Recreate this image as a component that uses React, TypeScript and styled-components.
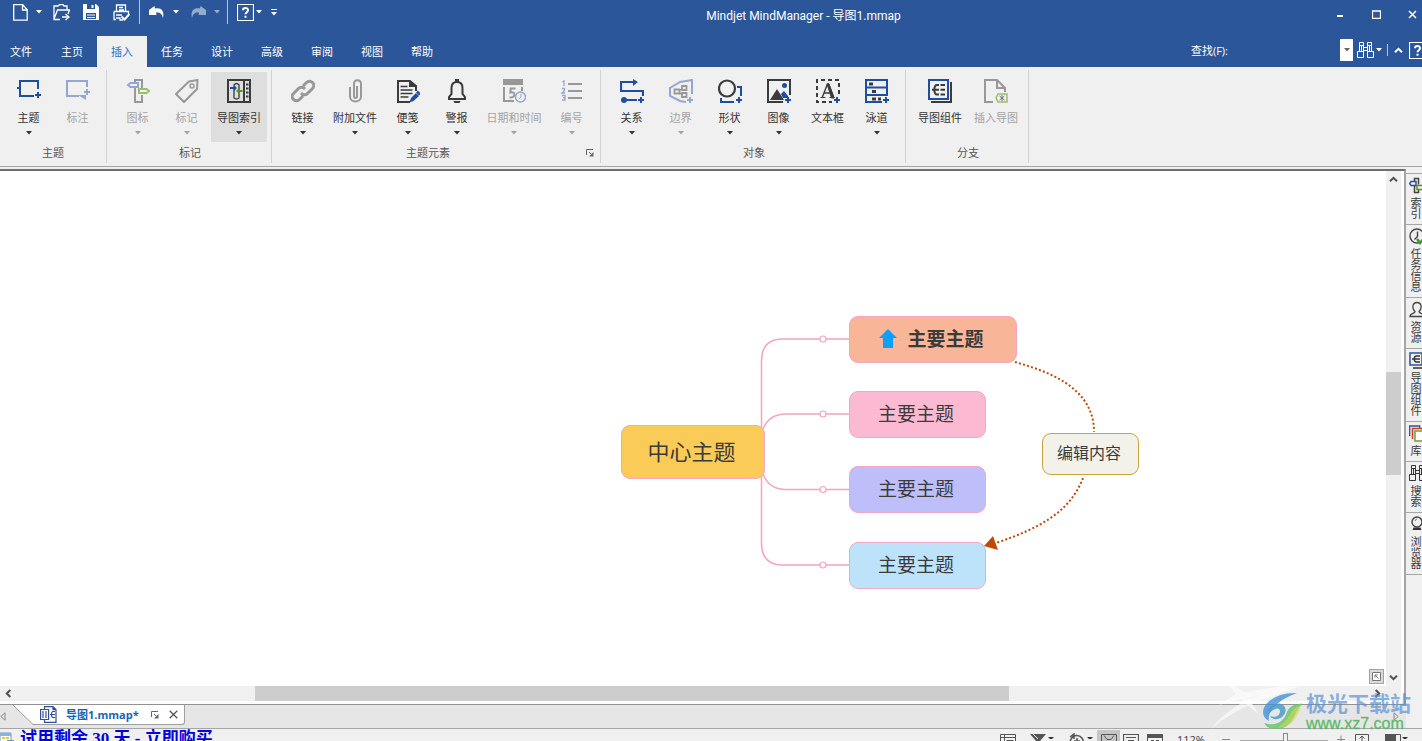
import React from "react";
import styled, { createGlobalStyle, css } from "styled-components";

const c = {
  brand: "#2b579a",
  ribbon: "#f0f0f0",
  line: "#a6a6a6",
  ink: "#3b3b3b",
  blue: "#1f4e9e",
  mutedBlue: "#93a7d0",
  grey: "#989898",
};

const GlobalStyle = createGlobalStyle`
  * { box-sizing: border-box; }
  body { margin: 0; overflow: hidden; }
  body, button, input { font-family: "Open Sans", "Noto Sans CJK SC", sans-serif; font-size: 11px; }
  button { border: 0; padding: 0; background: transparent; color: inherit; }
  svg { display: block; flex: none; }
`;

const Window = styled.div`
  position: relative;
  display: flex;
  flex-direction: column;
  height: 100vh;
  overflow: hidden;
  background: ${c.ribbon};
  color: ${c.ink};
`;

/* ---------- header ---------- */
const Header = styled.header`
  flex: none;
  background: ${c.brand};
  color: #fff;
`;
const TitleBar = styled.div`
  display: flex;
  align-items: center;
  height: 28px;
`;
const QuickAccess = styled.div`
  display: flex;
  align-items: center;
  height: 24px;
  align-self: flex-start;
  padding-left: 10px;
`;
const QuickButton = styled.button<{ $w: number; $faded?: boolean }>`
  display: flex;
  align-items: center;
  justify-content: center;
  width: ${(p) => p.$w}px;
  height: 24px;
  opacity: ${(p) => (p.$faded ? 0.5 : 1)};
`;
const Separator = styled.span<{ $h: number }>`
  width: 1px;
  height: ${(p) => p.$h}px;
  background: #b8c7e0;
`;
const Title = styled.h1`
  flex: 1;
  margin: 0;
  text-align: center;
  font-family: Roboto, "Noto Sans CJK SC", sans-serif;
  font-size: 12px;
  font-weight: 400;
`;
const WindowControls = styled.div`
  display: flex;
  gap: 24px;
  padding: 0 4px 0 12px;
`;
const ControlButton = styled.button`
  display: flex;
  align-items: center;
  justify-content: center;
  width: 12px;
  height: 24px;
`;
const TabRow = styled.div`
  display: flex;
  align-items: flex-end;
  height: 39px;
`;
const TabList = styled.nav`
  display: flex;
  flex: 1;
  padding-right: 4px;
`;
const Tab = styled.button<{ $active?: boolean }>`
  width: 50px;
  height: 31px;
  padding-bottom: 2px;
  &:first-child { width: 47px; padding-right: 5px; }
  ${(p) => p.$active && css`background: ${c.ribbon}; color: #2372c4;`}
`;
const Search = styled.div`
  display: flex;
  align-items: center;
  height: 34px;
`;
const SearchInput = styled.input`
  width: 112px;
  height: 22px;
  border: 0;
  outline: 0;
  background: transparent;
  color: #fff;
`;
const SearchDrop = styled.button`
  display: flex;
  align-items: center;
  justify-content: center;
  width: 13px;
  height: 22px;
  margin-right: 4px;
  background: #fff;
  color: #666;
`;
const HelpClip = styled.div`
  width: 17px;
  overflow: hidden;
  padding-left: 4px;
`;

/* ---------- ribbon ---------- */
const Ribbon = styled.section`
  flex: none;
  display: flex;
  height: 100px;
  padding-top: 3px;
  border-bottom: 1px solid ${c.line};
`;
const Group = styled.div<{ $left: number }>`
  position: relative;
  display: flex;
  flex-direction: column;
  height: 93px;
  padding: 2px 4px 0 ${(p) => p.$left}px;
  border-right: 1px solid #d2d2d2;
`;
const GroupItems = styled.div`
  display: flex;
`;
const GroupLabel = styled.div<{ $launcher?: boolean }>`
  margin-top: 3px;
  padding-right: ${(p) => (p.$launcher ? 18 : 0)}px;
  line-height: 16px;
  text-align: center;
  color: #555;
`;
const Launcher = styled.button`
  position: absolute;
  right: 6px;
  bottom: 6px;
`;
const Tool = styled.button<{ $w: number; $active?: boolean; $off?: boolean }>`
  display: flex;
  flex-direction: column;
  align-items: center;
  width: ${(p) => p.$w}px;
  height: 70px;
  padding-top: 7px;
  white-space: nowrap;
  color: ${(p) => (p.$off ? "#a3a3a3" : "#333")};
  background: ${(p) => (p.$active ? "#dedede" : "transparent")};
`;
const ToolLabel = styled.span`
  margin: 7px 0 5px;
  line-height: 16px;
`;

/* ---------- work area ---------- */
const Middle = styled.div`
  display: flex;
  flex: 1;
  min-height: 0;
  border-bottom: 1px solid ${c.line};
`;
const DocumentPane = styled.div`
  display: flex;
  flex-direction: column;
  flex: 1;
  min-width: 0;
  margin-top: 2px;
`;
const CanvasFrame = styled.div`
  flex: 1;
  min-height: 0;
  display: grid;
  grid-template-columns: 1fr 15px;
  grid-template-rows: 1fr 15px;
  padding: 0 3px 3px 0;
  border-top: 2px solid #6e6e6e;
  border-right: 2px solid ${c.line};
  background: #fdfdfd;
`;
const Canvas = styled.main`
  position: relative;
  overflow: hidden;
  background: #fff;
`;
const Links = styled.svg`
  position: absolute;
  inset: 0;
  width: 100%;
  height: 100%;
`;
const Node = styled.div<{ $x: number; $y: number; $w: number; $h: number; $bg: string; $size: number; $line?: string }>`
  position: absolute;
  left: ${(p) => p.$x}px;
  top: ${(p) => p.$y}px;
  width: ${(p) => p.$w}px;
  height: ${(p) => p.$h}px;
  display: flex;
  align-items: center;
  justify-content: center;
  gap: 10px;
  padding: 0 3px 2px 0;
  border: 1px solid ${(p) => p.$line ?? "#f4a6c4"};
  border-radius: 9px;
  background: ${(p) => p.$bg};
  font-size: ${(p) => p.$size}px;
  line-height: 24px;
  white-space: nowrap;
`;
const StrongText = styled.strong`
  font-weight: 700;
`;
const FitButton = styled.button`
  position: absolute;
  right: 2px;
  bottom: 2px;
  display: flex;
  align-items: center;
  justify-content: center;
  width: 15px;
  height: 15px;
  border: 1px solid #a4a4a4;
  background: #dadada;
`;
const VScroll = styled.div`
  display: flex;
  flex-direction: column;
  align-items: center;
  background: #f0f0f0;
`;
const HScroll = styled.div`
  display: flex;
  align-items: center;
  background: #f0f0f0;
`;
const ScrollButton = styled.button`
  display: flex;
  flex: none;
  align-items: center;
  justify-content: center;
  width: 17px;
  height: 17px;
`;
const Track = styled.div<{ $before: number; $thumb: number; $after: number; $dir: "row" | "column" }>`
  flex: 1;
  align-self: stretch;
  display: grid;
  ${(p) => (p.$dir === "row" ? "grid-template-columns" : "grid-template-rows")}: ${(p) => `${p.$before}fr ${p.$thumb}fr ${p.$after}fr`};
`;
const Thumb = styled.div<{ $dir: "row" | "column" }>`
  background: #cdcdcd;
  ${(p) => (p.$dir === "row" ? "grid-column: 2" : "grid-row: 2")};
`;
const Corner = styled.div`
  background: #f0f0f0;
`;

const DocTabs = styled.div`
  display: flex;
  flex: none;
  justify-content: space-between;
  height: 24px;
  border-top: 1px solid #929292;
  background: #e6e6e6;
`;
const DocTabsLeft = styled.div`
  display: flex;
  align-items: flex-start;
`;
const NavArrow = styled.button`
  display: flex;
  align-items: center;
  width: 13px;
  height: 23px;
`;
const DocTab = styled.div`
  display: flex;
  align-items: center;
  height: 20px;
  padding: 0 6px 0 6px;
  border: solid #a0a0a0;
  border-width: 0 1px 1px 0;
  border-radius: 0 0 3px 0;
  background: #fff;
`;
const DocName = styled.span`
  margin: 0 12px 0 9px;
  color: #1565b5;
  font-weight: 700;
  line-height: 18px;
`;
const DocButton = styled.button`
  margin-right: 10px;
  &:last-child { margin-right: 0; }
`;

/* ---------- side rail ---------- */
const Rail = styled.aside`
  flex: none;
  width: 16px;
  margin-top: 6px;
  overflow: hidden;
`;
const RailTab = styled.button`
  display: flex;
  flex-direction: column;
  align-items: flex-start;
  width: 20px;
  padding: 3px 0 5px 3px;
  border-top: 1px solid ${c.line};
  &:last-child { border-bottom: 1px solid ${c.line}; }
`;
const RailText = styled.span`
  margin-top: 3px;
  writing-mode: vertical-rl;
  text-orientation: upright;
  line-height: 13px;
`;

/* ---------- status bar ---------- */
const StatusBar = styled.footer`
  flex: none;
  display: flex;
  justify-content: space-between;
  height: 12px;
  overflow: hidden;
`;
const TrialLink = styled.a`
  display: flex;
  gap: 6px;
  height: 24px;
  color: #0000e0;
  font-family: "Liberation Serif", "Noto Sans CJK SC", serif;
  font-size: 17px;
  font-weight: 700;
  line-height: 20px;
  text-decoration: none;
  white-space: nowrap;
`;
const StatusTools = styled.div`
  display: flex;
  flex: none;
  align-items: flex-start;
  height: 24px;
  padding: 4px 14px 0 0;
`;
const StatusButton = styled.button<{ $w: number; $gap: number; $on?: boolean }>`
  display: flex;
  justify-content: center;
  width: ${(p) => p.$w}px;
  height: 20px;
  margin-left: ${(p) => p.$gap}px;
  ${(p) => p.$on && css`margin-top: -3px; padding-top: 3px; background: #c6c6c6;`}
`;
const ZoomValue = styled.span`
  width: 45px;
  margin-left: 14px;
  line-height: 14px;
`;
const ZoomSlider = styled.input`
  appearance: none;
  width: 88px;
  height: 14px;
  margin: 0 0 0 10px;
  background: linear-gradient(#a8a8a8, #a8a8a8) 0 7px / 100% 1px no-repeat;
  &::-webkit-slider-thumb {
    appearance: none;
    width: 5px;
    height: 14px;
    border: 1px solid #8a8a8a;
    background: #f0f0f0;
  }
`;

/* ---------- watermark ---------- */
const Watermark = styled.div`
  position: absolute;
  right: 11px;
  bottom: 8px;
  display: flex;
  align-items: flex-end;
  pointer-events: none;
`;
const Streaks = styled.svg`
  position: absolute;
  right: 106px;
  bottom: 2px;
`;
const Swirl = styled.svg`
  position: relative;
  margin-bottom: 3px;
`;
const MarkText = styled.div`
  position: relative;
  margin-left: 2px;
  font-size: 21px;
  font-weight: 700;
  line-height: 24px;
  color: rgba(86, 144, 214, 0.7);
`;
const MarkUrl = styled.div`
  font-family: "Liberation Sans", sans-serif;
  font-size: 16px;
  line-height: 18px;
  -webkit-text-stroke: 1px rgba(88, 184, 100, 0.3);
  color: rgba(78, 178, 92, 0.9);
  font-weight: 400;
`;

/* ---------- small glyphs ---------- */
const Caret = ({ color = "currentColor" }: { color?: string }) => (
  <svg width="6" height="4" viewBox="0 0 6 4"><path d="M0 0h6L3 3.5z" fill={color} /></svg>
);
const Chevron = ({ turn = 0, color = "#505050" }: { turn?: number; color?: string }) => (
  <svg width="9" height="9" viewBox="0 0 9 9">
    <path d="M1 6.3 4.5 2.8 8 6.3" fill="none" stroke={color} strokeWidth="2" transform={`rotate(${turn} 4.5 4.5)`} />
  </svg>
);
const CornerArrow = () => (
  <svg width="8" height="8" viewBox="0 0 8 8" fill="none" stroke="#666">
    <path d="M.5 6V.5H7M3 3l3.500 3.500" />
    <path d="M7.500 3v4.500H3z" fill="#666" stroke="none" />
  </svg>
);
const I = ({ children, size = 24 }: { children: React.ReactNode; size?: number }) => (
  <svg width={size} height={size} viewBox={`0 0 ${size} ${size}`} fill="none">{children}</svg>
);
const Plus = ({ x, y, color = c.blue }: { x: number; y: number; color?: string }) => (
  <path d={`M${x - 3} ${y}h6M${x} ${y - 3}v6`} stroke={color} strokeWidth="2" />
);
const MenuMark = () => <I size={6}><path d="M0 4h6L3 7z" fill="#333" /></I>;
const Binoculars = ({ color = "#fff" }: { color?: string }) => (
  <svg width="17" height="16" viewBox="0 0 17 16" fill="none" stroke={color}>
    <path d="M2.500.5h4v3h-4zM10.500.5h4v3h-4zM2.500 3.500v6h4v-6M10.500 3.500v6h4v-6M.5 9.500h6v6h-6zM10.500 9.500h6v6h-6zM6.500 5.500h4M6.500 8.500h4M4.500 4v5M12.500 4v5" />
  </svg>
);
const HelpBox = () => (
  <svg width="17" height="17" viewBox="0 0 17 17" fill="none" stroke="#fff">
    <path d="M.5.5h16v16H.5z" strokeWidth="1.200" />
    <path d="M6 6.300C6 3.300 11 3.300 11 6.200c0 2-2.500 2-2.500 4.100M8.500 11.800v2" strokeWidth="2" />
  </svg>
);

/* ---------- ribbon icons ---------- */
const icons: Record<string, React.ReactNode> = {
  topic: <I><path d="M21 10V2H3v15h14M0 9h3" stroke={c.blue} strokeWidth="2" /><Plus x={21} y={16} /></I>,
  callout: <I><path d="M21 8V2H1v15h12" stroke={c.mutedBlue} strokeWidth="2" /><path d="M12 16h8v5z" fill={c.mutedBlue} /><Plus x={21} y={13} color={c.mutedBlue} /></I>,
  marker: <I>
    <path d="M9 3V1h7v8M16 16v7H9V9" stroke={c.grey} strokeWidth="2" />
    <path d="M12 4H4.500L2 6l2.500 2H12z" stroke={c.mutedBlue} strokeWidth="2" />
    <path d="M13 10h7.500l2.500 2-2.500 2H13z" stroke="#9cbd6c" strokeWidth="2" />
  </I>,
  tag: <I><path d="M14 2.500 22.500 1 22 10 9 23 1 15z" stroke={c.grey} strokeWidth="2" strokeLinejoin="round" /><circle cx="17" cy="7" r="2" stroke={c.grey} strokeWidth="1.500" /></I>,
  index: <I>
    <path d="M1 1h22v22H1zM17 1v22" stroke={c.ink} strokeWidth="2" />
    <path d="M19 5.500h2.500M19 9.500h2.500M19 13.500h2.500M19 17.500h2.500" stroke={c.ink} strokeWidth="2" />
    <path d="M7 8V6q2.500-3 5 0v13q-2.500 2-5 0V10" stroke={c.ink} strokeWidth="1.300" />
    <path d="M3 8h4V6l3 3-3 3v-2H3z" fill={c.blue} /><path d="M15.500 11h-3V9l-3.500 3 3.500 3v-2h3z" fill="#5e8c1e" />
  </I>,
  link: <I>
    <path d="m10 14 .5.500a4 4 0 0 0 6 0l5-5a4 4 0 0 0-6-6L12 7" stroke={c.grey} strokeWidth="3" />
    <path d="m14 10-.5-.5a4 4 0 0 0-6 0l-5 5a4 4 0 0 0 6 6L12 17" stroke={c.grey} strokeWidth="3" />
  </I>,
  clip: <I><path d="M7 8v9.500c0 6.500 11 6.500 11 0V5c0-5-7-5-7 0v12c0 2.500 3 2.500 3 0V7" stroke={c.grey} strokeWidth="2" /></I>,
  note: <I>
    <path d="M20 12V7l-6-5H2v21h12" stroke={c.ink} strokeWidth="2" /><path d="M13 1v7h8z" fill={c.ink} />
    <path d="M4.500 7.500h7M4.500 11h12M4.500 14.500h12M4.500 18h8" stroke={c.ink} strokeWidth="1.500" />
    <path d="m13.500 23.500 1.500-4.500 5-5 3 3-5.500 5z" fill={c.blue} /><path d="m21 12.500 3 3" stroke={c.blue} strokeWidth="2.500" />
  </I>,
  bell: <I>
    <path d="M4 20h16v-2l-2.500-3V9c0-4-2.500-6-5.500-6S6.500 5 6.500 9v6L4 18z" stroke={c.ink} strokeWidth="2" />
    <path d="M10 0h4v3h-4zM8.500 22h7q-1 3-3.500 3t-3.500-3z" fill={c.ink} />
  </I>,
  date: <I>
    <path d="M1 0h20v6H1z" fill={c.grey} /><path d="M2 8v14h10M20 8v4" stroke={c.grey} strokeWidth="2" />
    <path d="M13.500 9.500H8.700l-.4 4c5.500-1.500 6 5.500-.8 5" stroke={c.grey} strokeWidth="2" />
    <circle cx="18.500" cy="18" r="5" stroke={c.mutedBlue} strokeWidth="1.500" fill="#f0f0f0" /><path d="M19 14.500V18l-2 2" stroke={c.mutedBlue} />
  </I>,
  number: <I>
    <path d="M8 5h14M8 12h14M8 19h14" stroke={c.grey} strokeWidth="2" />
    <path d="M2.500 3 4 2v5M2 9.500h2.500v2L2 14h3M2 16.500h3v4.500H2M3 18.700h2" stroke={c.mutedBlue} strokeWidth="1.300" />
  </I>,
  relation: <I>
    <path d="M14 3H1v9h22v5" stroke={c.blue} strokeWidth="2.200" /><path d="M13 0l5 3-5 4z" fill={c.blue} />
    <circle cx="4" cy="21" r="3" fill={c.blue} /><path d="M4 21h13" stroke={c.blue} strokeWidth="2" /><Plus x={21} y={21} />
  </I>,
  boundary: <I>
    <path d="M23 15V1L11 3 1 9v8l10 5 6 1" stroke={c.mutedBlue} strokeWidth="2" />
    <path d="M5.500 10.500h5v4h-5zM13 7h4.500v4H13zM13 14h4.500v4H13zM10.500 11l3-1M10.500 14l3 1" stroke={c.grey} strokeWidth="1.800" /><Plus x={21} y={21} color={c.mutedBlue} />
  </I>,
  shape: <I><circle cx="9" cy="9.500" r="8" stroke={c.ink} strokeWidth="2.200" /><path d="M19 8h4v9M3 19v4h13" stroke={c.blue} strokeWidth="2" /><Plus x={21} y={21} /></I>,
  image: <I>
    <path d="M23 16V1H1v22h15" stroke={c.ink} strokeWidth="2" /><path d="m3 21 7-11 7 11z" fill={c.ink} />
    <path d="m14 15 3-3 4 5v2h-5z" fill={c.blue} /><circle cx="17.500" cy="6.500" r="2.500" fill={c.blue} /><Plus x={21} y={21} />
  </I>,
  textbox: <I>
    <path d="M23 15V1H1v22h15" stroke={c.ink} strokeWidth="2" strokeDasharray="4 3" />
    <path d="m6 19 5.500-14h1L18 19M8 14h7" stroke={c.ink} strokeWidth="1.400" /><path d="m11 5 4.500 14h2.500L13 5zM4.500 18.500h5M13.500 18.500h4" fill={c.ink} stroke={c.ink} />
    <Plus x={21} y={21} />
  </I>,
  lane: <I>
    <path d="M22 17V1H1v22h16M1 8.500h21M1 16h21" stroke={c.blue} strokeWidth="2" />
    <path d="M4 3.500h4v3H4zM7 11h4v3H7zM7 18.500h4v3H7zM13 18.500h3v3h-3z" fill={c.ink} /><Plus x={21} y={21} />
  </I>,
  parts: <I>
    <path d="M23 3v20H3" stroke={c.ink} strokeWidth="2" /><path d="M1 1h19v19H1z" stroke={c.blue} strokeWidth="2" />
    <path d="M11 6H9C5.500 6 5.500 15.500 9 15.500h2M4 10.700h7M12.500 6H17M12.500 10.700H17M12.500 15.500H17" stroke={c.ink} strokeWidth="2" />
  </I>,
  insertMap: <I>
    <path d="M9 23H1V1h12l8 8v4M13 1v8h8" stroke={c.grey} strokeWidth="2" />
    <path d="M14 15h9v8h-9l-2-4z" stroke="#9cbd6c" strokeWidth="1.500" /><path d="m15.500 17 5 4m0-4-5 4M18 16v6" stroke="#777" />
  </I>,
};

type ToolSpec = [icon: string, label: string, width: number, state?: string];
const groups: { label: string; left: number; launcher?: boolean; tools: ToolSpec[] }[] = [
  { label: "主题", left: 4, tools: [["topic", "主题", 49, "v"], ["callout", "标注", 49, "off"]] },
  { label: "标记", left: 6, tools: [["marker", "图标", 49, "v off"], ["tag", "标记", 49, "v off"], ["index", "导图索引", 56, "v active"]] },
  {
    label: "主题元素", left: 6, launcher: true,
    tools: [["link", "链接", 49, "v"], ["clip", "附加文件", 56, "v"], ["note", "便笺", 49, "v"], ["bell", "警报", 49, "v"], ["date", "日期和时间", 66, "v off"], ["number", "编号", 49, "v off"]],
  },
  {
    label: "对象", left: 6,
    tools: [["relation", "关系", 49, "v"], ["boundary", "边界", 49, "v off"], ["shape", "形状", 49, "v"], ["image", "图像", 49, "v"], ["textbox", "文本框", 49], ["lane", "泳道", 49, "v"]],
  },
  { label: "分支", left: 6, tools: [["parts", "导图组件", 56], ["insertMap", "插入导图", 56, "off"]] },
];

const tabs = ["文件", "主页", "插入", "任务", "设计", "高级", "审阅", "视图", "帮助"];

const railTabs: [string, React.ReactNode][] = [
  ["索引", <I size={17}><path d="M5.500 4V1.500h4v6M9.500 12.500v3h-4v-7" stroke="#444" strokeWidth="1.500" /><path d="M7 4.500H2l-1.300 2L2 8.500h5z" stroke="#2b4fa0" strokeWidth="1.500" /><path d="M8 8.500h7v4H8z" stroke="#5e8c1e" strokeWidth="1.500" /></I>],
  ["任务信息", <I size={17}><circle cx="8" cy="8" r="7" stroke="#444" strokeWidth="1.400" /><path d="M8.500 3.500v5l-3 3" stroke="#444" strokeWidth="1.400" /><path d="m8 11 3 4 5-6" stroke="#3f9a1e" strokeWidth="2.500" /></I>],
  ["资源", <I size={17}><path d="M1 15.500c0-4 5-2.500 5-5C2.500 7 3.500 1.500 8 1.500s5.500 5.500 2 9c0 2.500 5 1 5 5z" stroke="#444" strokeWidth="1.300" /></I>],
  ["导图组件", <I size={17}><path d="M15.500 4v12H4" stroke="#333" strokeWidth="1.400" /><path d="M1 1h12v12H1z" stroke="#2b4fa0" strokeWidth="1.500" /><path d="M11 4H7.500C4.500 4 4.500 10 7.500 10H11M3 7h8" stroke="#333" strokeWidth="1.400" /></I>],
  ["库", <I size={17}><path d="M.7 11V1h10v2" stroke="#2b4fa0" strokeWidth="1.300" /><path d="M3.500 14V3.500h10v2" stroke="#d13b2a" strokeWidth="1.500" /><path d="M6 6h10v10H6z" stroke="#6ea02c" strokeWidth="1.500" fill="#fff" /></I>],
  ["搜索", <I size={17}><Binoculars color="#333" /></I>],
  ["浏览器", <I size={17}><circle cx="8" cy="6" r="5" stroke="#444" strokeWidth="1.400" /><path d="M4.500 11.500h7l1 2.500h-9z" fill="#333" /><path d="M6 5q.5-2 2-2" stroke="#777" /></I>],
];

const topics = [
  { y: 145, w: 168, bg: "#f8b597", marked: true },
  { y: 220, w: 137, bg: "#fbbad2" },
  { y: 295, w: 137, bg: "#bdbefa" },
  { y: 371, w: 137, bg: "#bde3fb" },
];

const branches = [
  "M761.500 270V190Q761.500 168 783 168H849",
  "M763 258Q769 243 786 243H849",
  "M763 303Q769 318.500 786 318.500H849",
  "M761.500 290V372Q761.500 394 783 394H849",
];

export default function App() {
  return (
    <>
      <GlobalStyle />
      <Window>
        <Header>
          <TitleBar>
            <QuickAccess>
              <QuickButton $w={20} aria-label="新建"><svg width="15" height="17" viewBox="0 0 15 17" fill="none" stroke="#fff" strokeWidth="1.300"><path d="M.7.7h9l4.500 5v10.500H.7zM9.500 1v5h4.500" /></svg></QuickButton>
              <QuickButton $w={17} aria-label="新建选项"><Caret /></QuickButton>
              <QuickButton $w={28} aria-label="打开"><svg width="17" height="17" viewBox="0 0 17 17" fill="none" stroke="#fff" strokeWidth="1.300"><path d="M7 15.500H1V2h4l1.500-1.300H10l1 1.300h3v4M1 15 4.500 6h12l-1.500 4M9 13h6" /><path d="m12.500 10 3.500 3-3.500 3" /></svg></QuickButton>
              <QuickButton $w={31} aria-label="保存"><svg width="16" height="16" viewBox="0 0 16 16"><path d="M0 0h13l3 3v13H0z" fill="#fff" /><path d="M4 0h8v5H4zM3 9h10v6H3z" fill={c.brand} /><path d="M8.500 1h2v3h-2zM4 10.500h8v1H4zM4 13h8v1H4z" fill="#fff" /></svg></QuickButton>
              <QuickButton $w={30} aria-label="打印"><svg width="17" height="17" viewBox="0 0 17 17" fill="none" stroke="#fff" strokeWidth="1.300"><path d="M3.500 7V1h9v6M6 3.500h4M6 6h5M1 7.500h14.500V11M3 15.500H1v-8M3 11h6M3 14h4v2h3" /><path d="m8.500 12.500 3 3 5-5.500" strokeWidth="2" /></svg></QuickButton>
              <QuickButton as="span" $w={6}><Separator $h={24} /></QuickButton>
              <QuickButton $w={29} aria-label="撤消"><svg width="16" height="13" viewBox="0 0 16 13"><path d="M0 4 5.500 0 6 2.500C11 1 16 4 14 12 13 7 10 6 7 6.500L7.500 9 0 9z" fill="#fff" /></svg></QuickButton>
              <QuickButton $w={9} aria-label="撤消选项"><Caret /></QuickButton>
              <QuickButton $w={35} $faded aria-label="重做"><svg width="16" height="13" viewBox="0 0 16 13"><path d="M16 4 10.500 0 10 2.500C5 1 0 4 2 12 3 7 6 6 9 6.500L8.500 9 16 9z" fill="#fff" /></svg></QuickButton>
              <QuickButton $w={4} $faded aria-label="重做选项"><Caret /></QuickButton>
              <QuickButton as="span" $w={17}><Separator $h={24} /></QuickButton>
              <QuickButton $w={18} aria-label="帮助"><HelpBox /></QuickButton>
              <QuickButton $w={9} aria-label="帮助选项"><Caret /></QuickButton>
              <QuickButton $w={22} aria-label="自定义"><svg width="6" height="7" viewBox="0 0 6 7" fill="#fff"><path d="M0 0h6v1H0zM0 3h6L3 6.500z" /></svg></QuickButton>
            </QuickAccess>
            <Title>Mindjet MindManager - 导图1.mmap</Title>
            <WindowControls>
              <ControlButton aria-label="最小化"><svg width="8" height="8" viewBox="0 0 8 8"><path d="M1 5h6v2H1z" fill="#fff" /></svg></ControlButton>
              <ControlButton aria-label="最大化"><svg width="9" height="9" viewBox="0 0 9 9"><path d="M.5 1h8v7.500h-8zM0 1h9" fill="none" stroke="#fff" strokeWidth="1.300" /></svg></ControlButton>
              <ControlButton aria-label="关闭"><svg width="9" height="9" viewBox="0 0 9 9"><path d="m1 1 7 7M8 1 1 8" stroke="#fff" strokeWidth="1.500" /></svg></ControlButton>
            </WindowControls>
          </TitleBar>
          <TabRow>
            <TabList>
              {tabs.map((t) => <Tab key={t} $active={t === "插入"}>{t}</Tab>)}
            </TabList>
            <Search>
              <label htmlFor="find">查找(F):</label>
              <SearchInput id="find" />
              <SearchDrop aria-label="查找历史"><Caret /></SearchDrop>
              <QuickButton $w={17} aria-label="查找"><Binoculars /></QuickButton>
              <QuickButton $w={9} aria-label="查找选项"><Caret /></QuickButton>
              <QuickButton as="span" $w={9}><Separator $h={12} /></QuickButton>
              <QuickButton $w={13} aria-label="折叠功能区"><Chevron color="#fff" /></QuickButton>
              <HelpClip><HelpBox /></HelpClip>
            </Search>
          </TabRow>
        </Header>

        <Ribbon>
          {groups.map((g) => (
            <Group key={g.label} $left={g.left}>
              <GroupItems>
                {g.tools.map(([icon, label, w, state = ""]) => (
                  <Tool key={icon} $w={w} $off={state.includes("off")} $active={state.includes("active")}>
                    {icons[icon]}
                    <ToolLabel>{label}</ToolLabel>
                    {state.includes("v") && <Caret />}
                  </Tool>
                ))}
              </GroupItems>
              <GroupLabel $launcher={g.launcher}>{g.label}</GroupLabel>
              {g.launcher && <Launcher aria-label="更多选项"><CornerArrow /></Launcher>}
            </Group>
          ))}
        </Ribbon>

        <Middle>
          <DocumentPane>
            <CanvasFrame>
              <Canvas>
                <Links>
                  <g fill="none" stroke="#f5a3c0" strokeWidth="1.500">
                    {branches.map((d) => <path key={d} d={d} />)}
                    {[168, 243, 318.5, 394].map((y) => <circle key={y} cx="823" cy={y} r="3" fill="#fff" strokeWidth="1.200" />)}
                  </g>
                  <g fill="none" stroke="#bf4a08" strokeWidth="2" strokeDasharray="2 2.200">
                    <path d="M1015 191C1050 201 1094 217 1094 261" />
                    <path d="M1083 307C1070 341 1040 357 996 372" />
                  </g>
                </Links>
                <Node $x={621} $y={254} $w={144} $h={54} $bg="#facb57" $size={22}>中心主题</Node>
                {topics.map((t) => (
                  <Node key={t.y} $x={849} $y={t.y} $w={t.w} $h={47} $bg={t.bg} $size={19}>
                    {t.marked ? (
                      <>
                        <svg width="18" height="19" viewBox="0 0 18 19"><path d="m9 0 9 9h-4v10H4V9H0z" fill="#0c9ffb" /></svg>
                        <StrongText>主要主题</StrongText>
                      </>
                    ) : "主要主题"}
                  </Node>
                ))}
                <Node $x={1042} $y={262} $w={97} $h={42} $bg="#f3f2ea" $line="#c9a43c" $size={16}>编辑内容</Node>
                <Links><path d="M984 375 993 365 998 379z" fill="#bf4a08" /></Links>
                <FitButton aria-label="适合窗口">
                  <svg width="9" height="9" viewBox="0 0 9 9" fill="none" stroke="#777"><path d="M.5.5h8v8h-8z" fill="#fff" /><path d="M3 5.500V3h2.500M3 3l3.500 3.500" /></svg>
                </FitButton>
              </Canvas>
              <VScroll>
                <ScrollButton aria-label="向上"><Chevron /></ScrollButton>
                <Track $dir="column" $before={184} $thumb={103} $after={194}><Thumb $dir="column" /></Track>
                <ScrollButton aria-label="向下"><Chevron turn={180} /></ScrollButton>
              </VScroll>
              <HScroll>
                <ScrollButton aria-label="向左"><Chevron turn={-90} /></ScrollButton>
                <Track $dir="row" $before={238} $thumb={754} $after={360}><Thumb $dir="row" /></Track>
                <ScrollButton aria-label="向右"><Chevron turn={90} /></ScrollButton>
              </HScroll>
              <Corner />
            </CanvasFrame>
            <DocTabs>
              <DocTabsLeft>
                <NavArrow aria-label="上一个"><svg width="6" height="9" viewBox="0 0 6 9"><path d="M5 .8v7.400L.8 4.500z" fill="none" stroke="#888" /></svg></NavArrow>
                <svg width="21" height="20" viewBox="0 0 21 20"><path d="M0 0h21v20h-1z" fill="#fff" /><path d="m0 0 20 19.500h1" fill="none" stroke="#999" /></svg>
                <DocTab>
                  <svg width="17" height="17" viewBox="0 0 17 17" fill="none" stroke="#31509a" strokeWidth="1.200"><path d="M4.500 3V.6H13l3 3v12.800H4.500V14M.6 3.500h8v10h-8zM3 5v7M6 5v7M15 5.500h-2c-2 0-2 6 0 6h2M10 8.500h5M13 .6v3h3" /></svg>
                  <DocName>导图1.mmap*</DocName>
                  <DocButton aria-label="还原"><CornerArrow /></DocButton>
                  <DocButton aria-label="关闭导图"><svg width="9" height="9" viewBox="0 0 9 9"><path d="m.7.7 7.600 7.600M8.300.7.7 8.300" stroke="#555" strokeWidth="1.300" /></svg></DocButton>
                </DocTab>
              </DocTabsLeft>
              <NavArrow aria-label="下一个"><svg width="6" height="9" viewBox="0 0 6 9"><path d="M1 .8v7.400L5.200 4.500z" fill="none" stroke="#888" /></svg></NavArrow>
            </DocTabs>
          </DocumentPane>
          <Rail>
            {railTabs.map(([label, icon]) => (
              <RailTab key={label}>{icon}<RailText>{label}</RailText></RailTab>
            ))}
          </Rail>
        </Middle>

        <StatusBar>
          <TrialLink href="#buy">
            <svg width="14" height="16" viewBox="0 0 14 16"><path d="M0 4h11v9H0z" fill="#fff" stroke="#7c96bd" /><path d="M0 4h11v3H0z" fill="#86b3e6" /><path d="M2 8h3v2H2zM6 8h3v2H6z" fill="#e3c75a" /><path d="M7 11h7v5H7z" fill="#6d93c2" /></svg>
            试用剩余 30 天 - 立即购买
          </TrialLink>
          <StatusTools>
            <StatusButton $gap={0} $w={16} aria-label="大纲"><I size={16}><path d="M.5 1.500h15v12H.5zM.5 4.500h15M4.500 1.500v12M6.500 7.500h7M6.500 10.500h7" stroke="#555" /></I></StatusButton>
            <StatusButton $gap={14} $w={16} aria-label="筛选"><I size={16}><path d="M0 1h16l-6 7v6H6V8z" fill="#555" /><path d="m3 1 5 5" stroke="#f0f0f0" /></I></StatusButton>
            <StatusButton $gap={2} $w={6} aria-label="筛选选项"><MenuMark /></StatusButton>
            <StatusButton $gap={15} $w={16} aria-label="刷新"><I size={16}><path d="M2 12A6.500 6.500 0 1 1 14 11M1 4l4-3v5M8 5v6M5 8h6" stroke="#555" strokeWidth="1.500" /></I></StatusButton>
            <StatusButton $gap={2} $w={6} aria-label="刷新选项"><MenuMark /></StatusButton>
            <StatusButton $gap={4} $w={23} $on aria-label="导图视图"><I size={16}><path d="M.5 1.500h15v12H.5zM3 2.500l3 4h4l3-4" stroke="#555" /></I></StatusButton>
            <StatusButton $gap={3} $w={16} aria-label="大纲视图"><I size={16}><path d="M.5 1.500h15v12H.5zM3 4.500h10M5 7.500h6" stroke="#555" strokeWidth="1.200" /></I></StatusButton>
            <StatusButton $gap={8} $w={16} aria-label="计划视图"><I size={16}><path d="M.5 1.500h15v12H.5z" stroke="#555" /><path d="M0 1h16v4H0zM4 7h3v3H4zM9 7h3v3H9z" fill="#555" /></I></StatusButton>
            <ZoomValue>112%</ZoomValue>
            <StatusButton $gap={0} $w={8} aria-label="缩小"><I size={8}><path d="M0 6.500h8" stroke="#888" /></I></StatusButton>
            <ZoomSlider type="range" min={0} max={100} defaultValue={52} aria-label="缩放" />
            <StatusButton $gap={9} $w={8} aria-label="放大"><I size={8}><path d="M0 6.500h8M4 2.500v8" stroke="#888" /></I></StatusButton>
            <StatusButton $gap={10} $w={14} aria-label="适合导图"><I size={14}><path d="M.5 1.500h13v12H.5zM7 3v6M4.500 5.500 7 3l2.500 2.500" stroke="#555" /></I></StatusButton>
            <StatusButton $gap={16} $w={16} aria-label="窗格"><I size={16}><path d="M.5 1.500h15v12H.5z" stroke="#555" /><path d="M0 1h11v13H0z" fill="#555" /></I></StatusButton>
            <StatusButton $gap={1} $w={6} aria-label="窗格选项"><MenuMark /></StatusButton>
          </StatusTools>
        </StatusBar>

        <Watermark>
          <Streaks width="96" height="50" viewBox="0 0 96 50">
            <path d="M2 48Q30 12 94 4L50 20Q20 32 2 48z" fill="#fff" opacity=".6" />
            <path d="m16 0 20 11L94 2 40 17 50 34 32 18 10 24 27 13z" fill="#fff" opacity=".6" />
          </Streaks>
          <Swirl width="42" height="38" viewBox="0 0 42 38">
            <path d="M35 1C17 0 2 9 1 20c0 4 2 7 6 9C5 18 16 8 35 1z" fill="#4492d6" opacity=".8" />
            <path d="M5 24c0-9 8-14 14-12 6 2 6 9 1 13-4 3-10 3-12-1 5 2 10 0 10-5 0-4-6-4-13 5z" fill="#4a9cc9" opacity=".85" />
            <path d="M2 31c13 4 20-2 23-11 2-5 8-9 16-8-6 3-6 9-10 15-4 7-10 10-17 10-6 0-10-2-12-6z" fill="#69c46c" opacity=".85" />
            <path d="M20 32c8-5 8-17 20-19-4 8-6 21-24 23z" fill="#d2dc4c" opacity=".55" />
          </Swirl>
          <MarkText>极光下载站<MarkUrl>www.xz7.com</MarkUrl></MarkText>
        </Watermark>
      </Window>
    </>
  );
}
